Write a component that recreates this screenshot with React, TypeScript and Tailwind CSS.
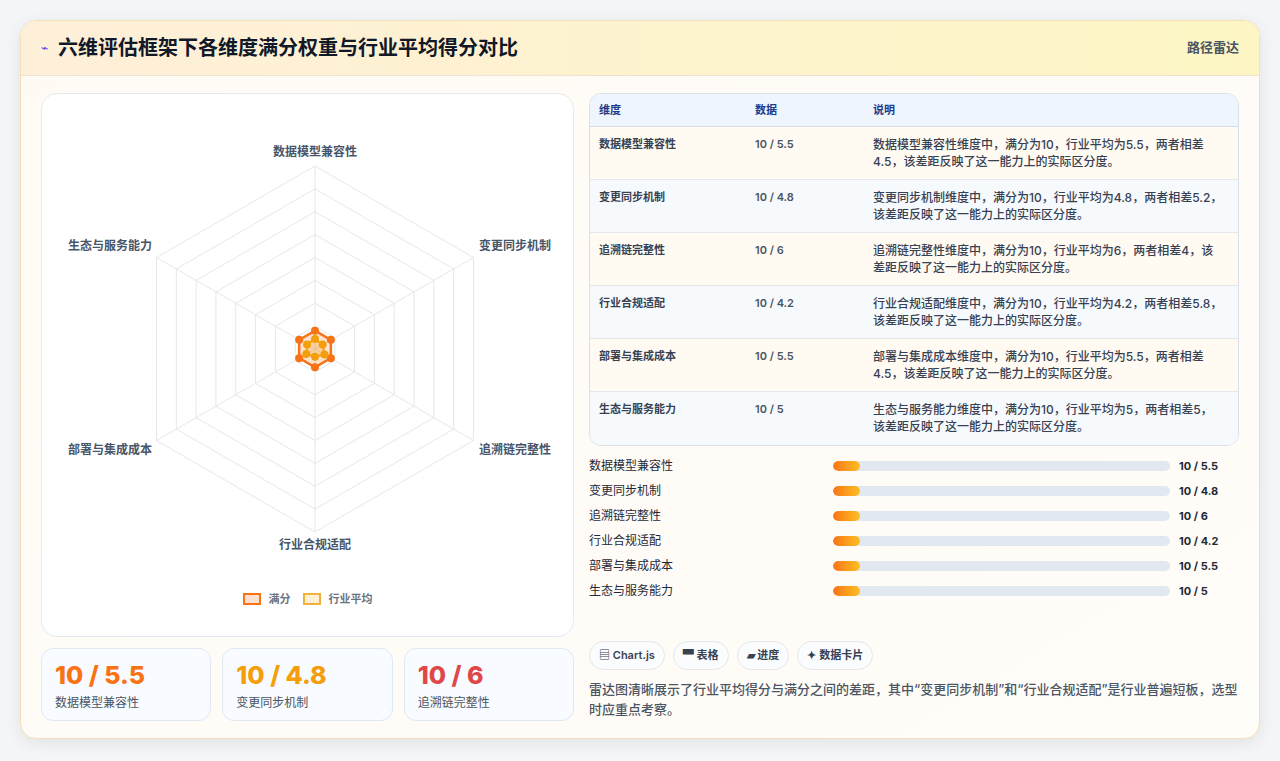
import React from 'react';

const DIMS = [
  { name: '数据模型兼容性', avg: 5.5 },
  { name: '变更同步机制', avg: 4.8 },
  { name: '追溯链完整性', avg: 6 },
  { name: '行业合规适配', avg: 4.2 },
  { name: '部署与集成成本', avg: 5.5 },
  { name: '生态与服务能力', avg: 5 },
];

const CX = 273;
const CY = 255;
const R = 183;

const pt = (i: number, r: number) => {
  const a = -Math.PI / 2 + (i * Math.PI) / 3;
  return [CX + r * Math.cos(a), CY + r * Math.sin(a)];
};

const poly = (vals: number[]) => vals.map((r, i) => pt(i, r).join(',')).join(' ');

function Radar() {
  const rings = [1, 2, 3, 4, 5, 6, 7, 8];
  const labelPos = [
    { x: CX, y: 62, anchor: 'middle' },
    { x: 437, y: 156, anchor: 'start' },
    { x: 437, y: 360, anchor: 'start' },
    { x: CX, y: 455, anchor: 'middle' },
    { x: 110, y: 360, anchor: 'end' },
    { x: 110, y: 156, anchor: 'end' },
  ];
  const full = DIMS.map(() => 18.3);
  const avg = DIMS.map((d) => d.avg * 1.83);
  return (
    <svg width="531" height="470" className="block">
      {rings.map((k) => (
        <polygon key={k} points={poly(DIMS.map(() => (R * k) / 8))} fill="none" stroke="#e5e7eb" strokeWidth="1" />
      ))}
      {DIMS.map((_, i) => {
        const [x, y] = pt(i, R);
        return <line key={i} x1={CX} y1={CY} x2={x} y2={y} stroke="#e5e7eb" />;
      })}
      {labelPos.map((l, i) => (
        <text key={i} x={l.x} y={l.y} textAnchor={l.anchor as any} fontSize="12" fontWeight="600" fill="#475569">
          {DIMS[i].name}
        </text>
      ))}
      <polygon points={poly(full)} fill="rgba(249,115,22,0.2)" stroke="#f97316" strokeWidth="2.5" />
      <polygon points={poly(avg)} fill="rgba(245,158,11,0.25)" stroke="#f59e0b" strokeWidth="2" />
      {full.map((r, i) => {
        const [x, y] = pt(i, r);
        return <circle key={'f' + i} cx={x} cy={y} r="4" fill="#f97316" />;
      })}
      {avg.map((r, i) => {
        const [x, y] = pt(i, r);
        return <circle key={'a' + i} cx={x} cy={y} r="4" fill="#f59e0b" />;
      })}
    </svg>
  );
}

export default function App() {
  const stats = [
    { v: '10 / 5.5', l: '数据模型兼容性', c: 'text-[#f97316]' },
    { v: '10 / 4.8', l: '变更同步机制', c: 'text-[#f59e0b]' },
    { v: '10 / 6', l: '追溯链完整性', c: 'text-[#e04848]' },
  ];
  return (
    <div
      className="w-[1280px] h-[761px] bg-[#f4f5f7] p-5 pb-[22px]"
      style={{ fontFamily: 'Inter, "Noto Sans CJK SC", sans-serif' }}
    >
      <div className="h-full rounded-2xl border border-[#f5dfb8] bg-gradient-to-br from-[#fffaf4] to-[#fffdf9] shadow-[0_4px_16px_rgba(0,0,0,0.08)] overflow-hidden flex flex-col">
        <div className="h-[55px] shrink-0 flex items-center justify-between px-5 bg-gradient-to-r from-[#feefd9] to-[#fdf6c4] border-b border-[#f0e4d0]">
          <div className="flex items-center gap-2.5">
            <span className="text-[12px] text-[#4f46e5]">⌁</span>
            <h1 className="text-[20px] font-bold text-[#111827]">六维评估框架下各维度满分权重与行业平均得分对比</h1>
          </div>
          <span className="text-[13px] font-semibold text-[#4b5563]">路径雷达</span>
        </div>
        <div className="flex-1 flex gap-[15px] px-5 pt-[17px]">
          <div className="w-[533px] flex flex-col gap-[11px]">
            <div className="h-[544px] bg-white border border-[#e5e9f0] rounded-2xl flex flex-col items-center">
              <Radar />
              <div className="flex items-center gap-2 mt-[27px] text-[11px] font-semibold text-[#6b7280]">
                <span className="w-[18px] h-[12px] border-[2.5px] border-[#f97316] bg-[#fde0d0]" />
                <span>满分</span>
                <span className="w-[18px] h-[12px] ml-1 border-2 border-[#f0b03c] bg-[#fef1d6]" />
                <span>行业平均</span>
              </div>
            </div>
            <div className="grid grid-cols-3 gap-[11px]">
              {stats.map((s) => (
                <div key={s.l} className="h-[73px] rounded-xl border border-[#dfe8f3] bg-[#f8fbff] px-[13px] pt-[11px]">
                  <div className={`text-[25px] leading-[30px] font-extrabold ${s.c}`}>{s.v}</div>
                  <div className="text-[12px] text-[#4b5563] mt-1">{s.l}</div>
                </div>
              ))}
            </div>
          </div>
          <div className="flex-1 flex flex-col">
            <div className="rounded-xl border border-[#d8e0ea] overflow-hidden bg-white">
              <div className="h-[33px] flex items-center bg-[#eef5fd] border-b border-[#d3dde9] text-[11px] font-semibold text-[#1e3a8a]">
                <div className="w-[165px] pl-[9px]">维度</div>
                <div className="w-[118px]">数据</div>
                <div className="flex-1">说明</div>
              </div>
              {DIMS.map((d, i) => (
                <div
                  key={d.name}
                  className={`h-[53px] flex items-start pt-[9px] text-[11px] leading-[17px] text-[#374151] border-b border-[#e3e8ee] last:border-b-0 ${
                    i % 2 === 0 ? 'bg-[#fffaf2]' : 'bg-[#f7fafd]'
                  }`}
                >
                  <div className="w-[165px] pl-[9px] font-semibold">{d.name}</div>
                  <div className="w-[118px] font-semibold text-[#4b5563]">10 / {d.avg}</div>
                  <div className="flex-1 pr-[14px] font-medium text-[12px]">
                    {d.name}维度中，满分为10，行业平均为{d.avg}，两者相差{Math.round((10 - d.avg) * 10) / 10}，该差距反映了这一能力上的实际区分度。
                  </div>
                </div>
              ))}
            </div>
            <div className="flex flex-col gap-[7px] mt-[11px]">
              {DIMS.map((d) => (
                <div key={d.name} className="h-[18px] flex items-center text-[12px] text-[#1f2937]">
                  <div className="w-[244px]">{d.name}</div>
                  <div className="w-[337px] h-[10px] rounded-full bg-[#e2e8f0] overflow-hidden">
                    <div className="w-[27px] h-full rounded-full bg-gradient-to-r from-[#f97316] to-[#fbbf24]" />
                  </div>
                  <div className="ml-[9px] text-[11px] font-bold">10 / {d.avg}</div>
                </div>
              ))}
            </div>
            <div className="flex gap-2 mt-[41px]">
              {['▤ Chart.js', '▀ 表格', '▰ 进度', '✦ 数据卡片'].map((t) => (
                <span key={t} className="h-[29px] px-[9px] flex items-center rounded-full border border-[#e5e7eb] bg-[#fbfcfd] text-[11px] font-semibold text-[#374151]">
                  {t}
                </span>
              ))}
            </div>
            <p className="mt-[9px] text-[13px] leading-[20px] text-[#4b5563] font-medium">
              雷达图清晰展示了行业平均得分与满分之间的差距，其中“变更同步机制”和“行业合规适配”是行业普遍短板，选型时应重点考察。
            </p>
          </div>
        </div>
      </div>
    </div>
  );
}
